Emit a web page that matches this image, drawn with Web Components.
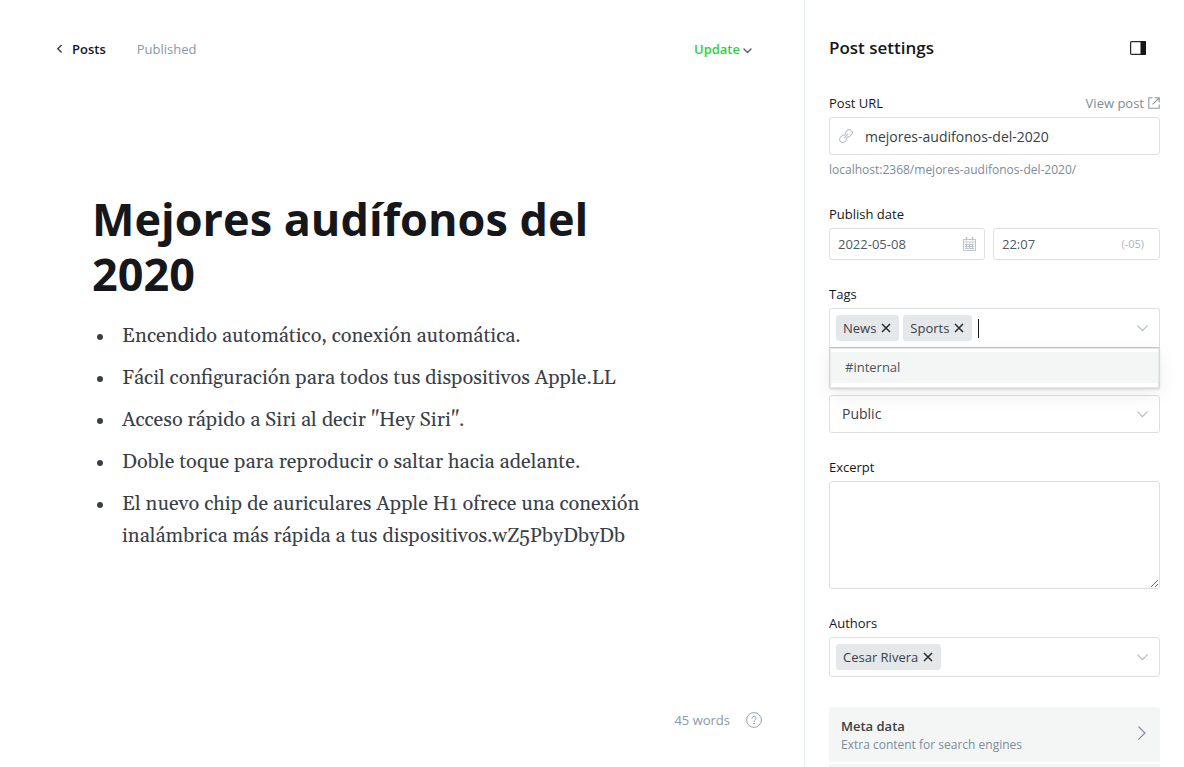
<!DOCTYPE html>
<html lang="es">
<head>
<meta charset="utf-8">
<meta name="viewport" content="width=device-width, initial-scale=1">
<title>Mejores audífonos del 2020</title>
<style>
  body {
    margin: 0;
    background: #fff;
    color: #15171a;
    font: 400 13px/20px "Open Sans", "Noto Sans", sans-serif;
    --ink: #15171a;
    --text: #394047;
    --muted: #7c8b9a;
    --soft: #aab4be;
    --line: #dddfe1;
    --chip: #e5e8eb;
    --panel: #f4f6f6;
    --green: #30cf43;
  }
</style>
</head>
<body>
<app-shell>
  <post-editor>
    <editor-header slot="header"></editor-header>
    <h1 slot="title">Mejores audífonos del 2020</h1>
    <post-list></post-list>
    <editor-footer slot="footer" words="45"></editor-footer>
  </post-editor>
  <settings-panel slot="aside"></settings-panel>
</app-shell>

<script>
  const define = (name, html, setup) => {
    const template = document.createElement('template');
    template.innerHTML = html;
    customElements.define(name, class extends HTMLElement {
      constructor() {
        super();
        this.attachShadow({ mode: 'open' }).append(template.content.cloneNode(true));
      }
      connectedCallback() {
        if (setup) setup(this, this.shadowRoot);
      }
    });
  };

  define('app-shell', `
    <style>
      :host { display: grid; grid-template-columns: minmax(0, 1fr) 380px; height: 100vh; }
      main { min-width: 0; overflow: auto; display: grid; grid-template-columns: minmax(0, 1fr); }
      aside { box-sizing: border-box; border-left: 1px solid #e5eaed; overflow: auto; scrollbar-width: none; display: grid; grid-template-columns: minmax(0, 1fr); }
    </style>
    <main><slot></slot></main>
    <aside><slot name="aside"></slot></aside>`);

  define('post-editor', `
    <style>
      :host { display: flex; flex-direction: column; min-height: 100%; box-sizing: border-box; }
      article { box-sizing: border-box; width: 100%; max-width: 620px; margin: 125px auto 32px; }
      ::slotted(h1) { max-width: 600px; margin: 0 0 19px; font-size: 45px; line-height: 55px; font-weight: 700; color: var(--ink); }
      ::slotted(editor-footer) { margin-top: auto; }
    </style>
    <slot name="header"></slot>
    <article><slot name="title"></slot><slot></slot></article>
    <slot name="footer"></slot>`);

  define('editor-header', `
    <style>
      :host { display: block; padding: 32px 52px 0 56px; }
      header { display: flex; align-items: center; height: 34px; }
      a { display: flex; align-items: center; gap: 8px; color: var(--ink); font-weight: 600; text-decoration: none; }
      span { margin-left: 31px; color: #8b98a5; }
      button { margin-left: auto; display: flex; align-items: center; gap: 3px; border: 0; padding: 0; background: none; font: inherit; font-weight: 600; color: var(--green); }
      button svg { margin-top: 4px; }
    </style>
    <header>
      <a href="#posts"><svg width="8" height="10" viewBox="0 0 8 10" fill="none" stroke="#394047" stroke-width="1.4" aria-hidden="true"><path d="M5.6 1 1.8 4.7l3.8 3.8"/></svg>Posts</a>
      <span>Published</span>
      <button type="button">Update<svg width="9" height="6" viewBox="0 0 9 6" fill="none" stroke="#5d6873" stroke-width="1.5" stroke-linecap="round" aria-hidden="true"><path d="M1 1l3.5 3.5L8 1"/></svg></button>
    </header>`);

  define('post-list', `
    <style>
      :host { display: block; }
      ul { margin: 0; padding: 0; list-style: none; display: grid; gap: 10px; font: 20px/32px Gelasio, Georgia, "Liberation Serif", serif; color: var(--text); }
      li { display: grid; grid-template-columns: 16px minmax(0, 1fr); column-gap: 14px; }
      li::before { content: ""; width: 6px; height: 6px; margin-top: 14px; justify-self: center; border-radius: 50%; background: currentColor; }
    </style>
    <ul>
      <li>Encendido automático, conexión automática.</li>
      <li>Fácil configuración para todos tus dispositivos Apple.LL</li>
      <li>Acceso rápido a Siri al decir "Hey Siri".</li>
      <li>Doble toque para reproducir o saltar hacia adelante.</li>
      <li>El nuevo chip de auriculares Apple H1 ofrece una conexión inalámbrica más rápida a tus dispositivos.wZ5PbyDbyDb</li>
    </ul>`);

  define('editor-footer', `
    <style>
      :host { display: block; padding: 0 42px 37px; }
      footer { display: flex; justify-content: flex-end; align-items: center; gap: 16px; color: #8b98a5; }
      a { display: flex; }
    </style>
    <footer>
      <span></span>
      <a href="#help" aria-label="Help"><svg width="16" height="16" viewBox="0 0 16 16" fill="none" stroke="#98a4b0" stroke-width="1" stroke-linecap="round"><circle cx="8" cy="8" r="7.4"/><path d="M5.9 6.3A2.1 2.1 0 1 1 8.7 8.3C8.2 8.5 8 8.8 8 9.6"/><circle cx="8" cy="11.7" r=".4" fill="#98a4b0"/></svg></a>
    </footer>`,
    (host, root) => { root.querySelector('span').textContent = host.getAttribute('words') + ' words'; });

  /* One labelled group of the panel: a label row, the control, and a hint under it. */
  define('setting-field', `
    <style>
      :host { display: block; }
      .head { display: flex; justify-content: space-between; margin-bottom: 4px; }
      :host([bare]) .head { display: none; }
      ::slotted(label) { font-weight: 500; color: var(--ink); }
    </style>
    <div class="head"><slot name="label"></slot><slot name="action"></slot></div>
    <slot></slot>`);

  define('token-input', `
    <style>
      :host { display: block; position: relative; }
      label { display: block; margin-bottom: 4px; font-weight: 500; color: var(--ink); }
      .box { position: relative; }
      .field { box-sizing: border-box; display: flex; align-items: center; gap: 4px; min-height: 40px; padding: 6px 11px 6px 6px; border: 1px solid var(--line); border-radius: 3px; background: #fff; }
      :host([open]) .field { border-bottom-color: #c3c7cb; border-radius: 3px 3px 0 0; }
      .chips { display: flex; gap: 4px; }
      .caret { display: none; width: 1px; height: 19px; margin-left: 2px; background: var(--ink); }
      :host([open]) .caret { display: block; }
      input { flex: 1; min-width: 0; height: 20px; border: 0; padding: 0; outline: 0; background: none; font: inherit; caret-color: transparent; }
      ul { position: absolute; z-index: 1; left: 0; right: 0; top: 100%; margin: 0; padding: 4px 0 5px; list-style: none; border: 1px solid #d5d9dc; border-width: 0 1px 1px; border-radius: 0 0 3px 3px; background: #fff; box-shadow: inset 0 0 0 1px #e6e8ea, 0 1px 2px rgba(0,0,0,.08), 0 6px 20px rgba(0,0,0,.07); }
      :host(:not([open])) ul { display: none; }
      li { margin: 0 1px; padding: 0 14px; line-height: 31px; background: #f4f6f6; color: #4b545d; }
    </style>
    <label for="entry"></label>
    <div class="box">
      <div class="field">
        <div class="chips"><slot></slot></div>
        <span class="caret"></span>
        <input id="entry" type="text" autocomplete="off">
        <svg width="11" height="7" viewBox="0 0 11 7" fill="none" stroke="#b3bdc7" stroke-width="1.2" stroke-linecap="round" aria-hidden="true"><path d="M.8.8l4.7 4.9L10.2.8"/></svg>
      </div>
      <ul role="listbox"><li role="option"></li></ul>
    </div>`,
    (host, root) => {
      root.querySelector('label').textContent = host.getAttribute('label');
      const option = root.querySelector('li');
      if (host.hasAttribute('option')) option.textContent = host.getAttribute('option');
      else option.parentNode.remove();
    });

  define('token-chip', `
    <style>
      :host { display: flex; align-items: center; gap: 5px; height: 26px; padding: 0 8px 0 7px; border-radius: 3px; background: var(--chip); color: var(--text); font-weight: 500; }
      button { display: flex; border: 0; padding: 0; background: none; }
    </style>
    <slot></slot>
    <button type="button" aria-label="Remove"><svg width="10" height="10" viewBox="0 0 10 10" stroke="#24292e" stroke-width="1.5"><path d="M1 1l8 8M9 1L1 9"/></svg></button>`);

  define('menu-item', `
    <style>
      :host { display: block; background: var(--panel); border-bottom: 2px solid #fff; }
      button { box-sizing: border-box; width: 100%; min-height: 55px; display: flex; align-items: center; justify-content: space-between; border: 0; padding: 9px 14px 9px 12px; background: none; font: inherit; text-align: left; }
      div { display: grid; }
      .title { line-height: 19px; font-weight: 600; color: var(--text); }
      .note { font-size: 12px; line-height: 17px; color: var(--muted); }
      svg { margin-bottom: 4px; }
    </style>
    <button type="button">
      <div><span class="title"><slot></slot></span><span class="note"><slot name="note"></slot></span></div>
      <svg width="8" height="14" viewBox="0 0 8 14" fill="none" stroke="#7c8b9a" stroke-width="1.2" stroke-linecap="round" aria-hidden="true"><path d="M.8.8L7 7 .8 13.2"/></svg>
    </button>`);

  define('settings-panel', `
    <style>
      :host { display: flex; flex-direction: column; min-height: 100%; box-sizing: border-box; padding: 32px 24px 0; }
      header { display: flex; align-items: center; justify-content: space-between; height: 32px; margin-bottom: 29px; }
      h2 { margin: 0; font-size: 17px; line-height: 24px; font-weight: 600; }
      header button { display: flex; justify-content: center; width: 44px; border: 0; padding: 0; background: none; }
      form { display: grid; grid-template-columns: minmax(0, 1fr); gap: 24px; }
      a { display: flex; align-items: center; gap: 4px; color: var(--muted); text-decoration: none; }
      .control { box-sizing: border-box; min-width: 0; display: flex; align-items: center; border: 1px solid var(--line); border-radius: 3px; background: #fff; }
      .url { height: 38px; padding: 0 9px; gap: 12px; }
      input { flex: 1; min-width: 0; height: 28px; border: 0; padding: 0; outline: 0; background: none; font: inherit; color: #4b5966; }
      .url input { font-size: 14px; color: var(--text); }
      p { margin: 5px 0 0; font-size: 12px; color: var(--muted); }
      .when { display: grid; grid-template-columns: minmax(0, 156fr) minmax(0, 167fr); gap: 8px; }
      .when .control { height: 32px; padding: 0 8px; }
      .when span { margin-right: 7px; font-size: 11px; color: var(--soft); }
      select { display: block; box-sizing: border-box; width: 100%; height: 38px; margin: 0; border: 1px solid var(--line); border-radius: 3px; padding: 0 12px; appearance: none; background: #fff; font: inherit; font-size: 14px; color: var(--text); }
      .select { display: grid; align-items: center; }
      .select > * { grid-area: 1 / 1; }
      .select svg { justify-self: end; margin-right: 12px; pointer-events: none; }
      .access { margin-top: 23px; }
      textarea { display: block; box-sizing: border-box; width: 100%; height: 108px; border: 1px solid var(--line); border-radius: 3px; padding: 8px 12px; resize: vertical; outline: 0; background: #fff; font: inherit; }
      nav { flex: 1; display: flex; flex-direction: column; margin-top: 30px; border-radius: 3px 3px 0 0; overflow: hidden; background: var(--panel); }
    </style>
    <header>
      <h2>Post settings</h2>
      <button type="button" aria-label="Close settings"><svg width="16" height="14" viewBox="0 0 16 14"><rect x=".6" y=".6" width="14.8" height="12.8" rx="1" fill="#fff" stroke="#24272b" stroke-width="1.2"/><path d="M10.5 0H15a1 1 0 0 1 1 1v12a1 1 0 0 1-1 1h-4.5z" fill="#15171a"/></svg></button>
    </header>
    <form>
      <setting-field>
        <label slot="label" for="url">Post URL</label>
        <a slot="action" href="#view">View post<svg width="12" height="12" viewBox="0 0 12 12" fill="none" stroke="#8c99a6" stroke-width="1.1" aria-hidden="true"><path d="M4.4.8H.8v10.4h10.4V7.6M6.6.8h4.6v4.6M11 1L4.6 7.4"/></svg></a>
        <div class="control url">
          <svg width="14" height="14" viewBox="0 0 24 24" fill="none" stroke="#b9bfc5" stroke-width="1.8" stroke-linecap="round" stroke-linejoin="round" aria-hidden="true"><path d="M8.5 15.5l7-7"/><path d="M13.2 14.7a4 4 0 0 1-.9 4.2l-3 3a4.2 4.2 0 0 1-6-.1l-1.2-1.2a4.2 4.2 0 0 1 .1-6l3-3a4 4 0 0 1 4.2-.9"/><path d="M10.8 9.3a4 4 0 0 1 .9-4.2l3-3a4.2 4.2 0 0 1 6 .1l1.2 1.2a4.2 4.2 0 0 1-.1 6l-3 3a4 4 0 0 1-4.2.9"/></svg>
          <input id="url" type="text" value="mejores-audifonos-del-2020">
        </div>
        <p>localhost:2368/mejores-audifonos-del-2020/</p>
      </setting-field>
      <setting-field>
        <label slot="label" for="date">Publish date</label>
        <div class="when">
          <div class="control">
            <input id="date" type="text" value="2022-05-08">
            <svg width="13" height="14" viewBox="0 0 13 14" fill="none" stroke="#bfc5cb" stroke-width="1" aria-hidden="true"><path d="M.5 2.5h12v11H.5zM.5 5h12M3.5 6.5v5.5M6.5 6.5v5.5M9.5 6.5v5.5M2 7.5h9M2 9.5h9M2 11.5h9"/><path d="M3.5 0v3.5M9.5 0v3.5" stroke-width="1.5"/></svg>
          </div>
          <div class="control">
            <input type="text" value="22:07" aria-label="Publish time">
            <span>(-05)</span>
          </div>
        </div>
      </setting-field>
      <token-input label="Tags" option="#internal" open>
        <token-chip>News</token-chip><token-chip>Sports</token-chip>
      </token-input>
      <setting-field bare class="access">
        <div class="select">
          <select aria-label="Post access"><option>Public</option></select>
          <svg width="11" height="7" viewBox="0 0 11 7" fill="none" stroke="#b3bdc7" stroke-width="1.2" stroke-linecap="round" aria-hidden="true"><path d="M.8.8l4.7 4.9L10.2.8"/></svg>
        </div>
      </setting-field>
      <setting-field>
        <label slot="label" for="excerpt">Excerpt</label>
        <textarea id="excerpt"></textarea>
      </setting-field>
      <token-input label="Authors">
        <token-chip>Cesar Rivera</token-chip>
      </token-input>
    </form>
    <nav><menu-item>Meta data<span slot="note">Extra content for search engines</span></menu-item></nav>`);
</script>
</body>
</html>
